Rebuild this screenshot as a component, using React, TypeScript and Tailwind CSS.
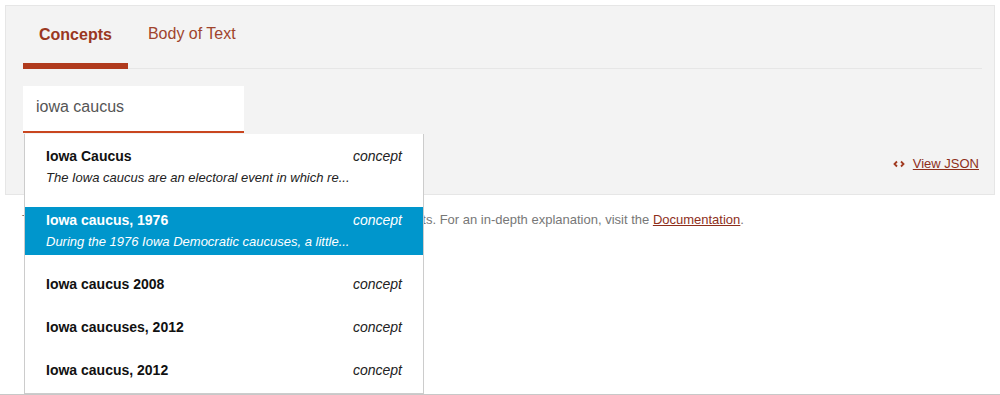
import React, { useState } from "react";

interface Suggestion {
    title: string;
    type: string;
    description?: string;
}

const suggestions: Suggestion[] = [
    {
        title: "Iowa Caucus",
        type: "concept",
        description: "The Iowa caucus are an electoral event in which re...",
    },
    {
        title: "Iowa caucus, 1976",
        type: "concept",
        description: "During the 1976 Iowa Democratic caucuses, a little...",
    },
    { title: "Iowa caucus 2008", type: "concept" },
    { title: "Iowa caucuses, 2012", type: "concept" },
    { title: "Iowa caucus, 2012", type: "concept" },
];

function CodeIcon() {
    return (
        <svg width="12" height="8" viewBox="0 0 12 8" fill="none" className="mr-[8px]">
            <path d="M4 1.5 1.5 4 4 6.5" stroke="#a0391f" strokeWidth="1.8" />
            <path d="M8 1.5 10.5 4 8 6.5" stroke="#a0391f" strokeWidth="1.8" />
        </svg>
    );
}

export default function App() {
    const [query, setQuery] = useState("iowa caucus");
    const [active, setActive] = useState(1);

    return (
        <div className="relative w-[1000px] h-[395px] bg-white flex flex-col font-['Liberation_Sans',Arial,sans-serif]">
            <div className="pt-[5px] px-[5px]">
                <div className="h-[190px] border border-[#e6e6e6] bg-[#f3f3f3] pl-[17px] pr-[12px] flex flex-col">
                    {/* tabs */}
                    <div className="flex items-end h-[63px] border-b border-[#e6e6e6]">
                        <button className="h-[62px] px-[16px] border-b-[6px] border-[#b03a1d] text-[16px] font-bold text-[#9a3721] mb-[-1px]">
                            Concepts
                        </button>
                        <button className="h-[62px] px-[20px] pb-[6px] text-[16px] text-[#a0442c]">
                            Body of Text
                        </button>
                    </div>

                    {/* search */}
                    <div className="mt-[17px] w-[221px] h-[47px] bg-white border-b-2 border-[#c9461f] flex items-center px-[13px] pb-[4px]">
                        <input
                            value={query}
                            onChange={(e) => setQuery(e.target.value)}
                            className="w-full bg-transparent outline-none text-[16px] text-[#555555]"
                        />
                    </div>

                    <div className="flex justify-end items-center pr-[3px] mt-[21px]">
                        <CodeIcon />
                        <a href="#" className="text-[13px] text-[#8e2f1b] underline">
                            View JSON
                        </a>
                    </div>
                </div>
            </div>

            <p className="mt-[15px] pl-[22px] text-[13px] text-[#777777]">
                Type a term into the search box above to see all the matching concepts. For an in-depth explanation, visit the{" "}
                <a href="#" className="text-[#8e2f1b] underline">Documentation</a>.
            </p>

            <div className="mt-auto border-b border-[#c8c8c8] h-[2px]" />

            {/* autocomplete dropdown */}
            <ul className="absolute left-[24px] top-[134px] w-[400px] bg-white border border-[#cccccc] border-t-0 pt-[9px] pb-[9px] flex flex-col gap-[16px]">
                {suggestions.map((s, i) => (
                    <li
                        key={s.title}
                        onMouseEnter={() => setActive(i)}
                        className={`px-[21px] pt-[5px] pb-[5px] ${i === active ? "bg-[#0096cc] text-white" : "text-[#111111]"}`}
                    >
                        <div className="flex justify-between items-center leading-[17px]">
                            <span className="text-[14px] font-bold">{s.title}</span>
                            <span className={`text-[14px] italic ${i === active ? "text-white" : "text-[#222222]"}`}>
                                {s.type}
                            </span>
                        </div>
                        {s.description && (
                            <div className={`mt-[4px] text-[13px] italic leading-[17px] ${i === active ? "text-white" : "text-[#222222]"}`}>
                                {s.description}
                            </div>
                        )}
                    </li>
                ))}
            </ul>
        </div>
    );
}
